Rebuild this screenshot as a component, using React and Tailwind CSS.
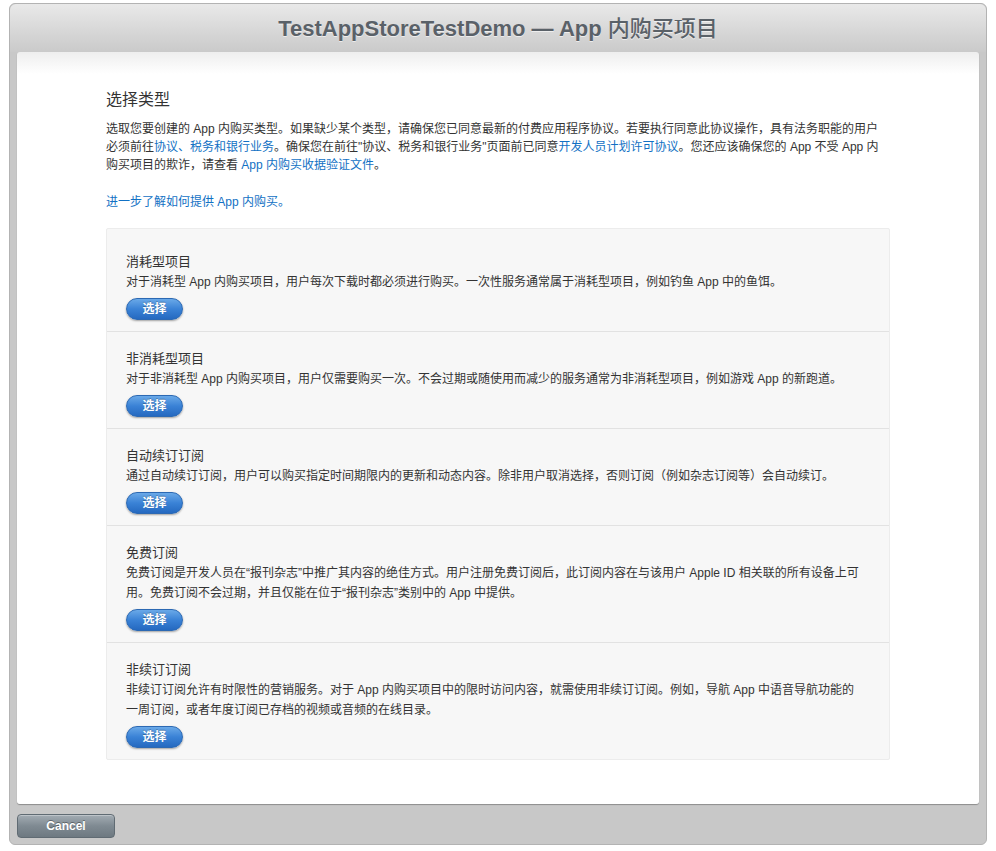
import React from "react";

const font = { fontFamily: '"Liberation Sans", "Noto Sans CJK SC", sans-serif' };

const sections = [
  {
    title: "消耗型项目",
    desc: ["对于消耗型 App 内购买项目，用户每次下载时都必须进行购买。一次性服务通常属于消耗型项目，例如钓鱼 App 中的鱼饵。"],
  },
  {
    title: "非消耗型项目",
    desc: ["对于非消耗型 App 内购买项目，用户仅需要购买一次。不会过期或随使用而减少的服务通常为非消耗型项目，例如游戏 App 的新跑道。"],
  },
  {
    title: "自动续订订阅",
    desc: ["通过自动续订订阅，用户可以购买指定时间期限内的更新和动态内容。除非用户取消选择，否则订阅（例如杂志订阅等）会自动续订。"],
  },
  {
    title: "免费订阅",
    desc: [
      "免费订阅是开发人员在“报刊杂志”中推广其内容的绝佳方式。用户注册免费订阅后，此订阅内容在与该用户 Apple ID 相关联的所有设备上可",
      "用。免费订阅不会过期，并且仅能在位于“报刊杂志”类别中的 App 中提供。",
    ],
  },
  {
    title: "非续订订阅",
    desc: [
      "非续订订阅允许有时限性的营销服务。对于 App 内购买项目中的限时访问内容，就需使用非续订订阅。例如，导航 App 中语音导航功能的",
      "一周订阅，或者年度订阅已存档的视频或音频的在线目录。",
    ],
  },
];

function SelectButton() {
  return (
    <button className="mt-[6px] h-[22px] w-[57px] rounded-full border border-[#2c69b3] bg-[linear-gradient(to_bottom,#6aa9e8,#3a82d6_50%,#2569c0)] text-[12px] font-bold leading-[20px] text-white shadow-[0_1px_2px_rgba(0,0,0,0.35)] [text-shadow:0_-1px_0_rgba(0,0,0,0.25)]">
      选择
    </button>
  );
}

export default function App() {
  return (
    <div style={font} className="h-[851px] w-[996px] bg-white px-[9px] pt-[3px]">
      <div className="flex h-[842px] flex-col rounded-[6px] border border-[#b3b3b3] bg-[#c8c8c8]">
        <div className="flex h-[48px] items-center justify-center rounded-t-[6px] bg-[linear-gradient(to_bottom,#e9e9e9,#d6d6d6_60%,#cacaca)]">
          <h1 className="text-[22px] font-bold text-[#5a6168] [text-shadow:0_1px_0_rgba(255,255,255,0.6)]">
            TestAppStoreTestDemo — App <span className="font-medium">内购买项目</span>
          </h1>
        </div>
        <div className="mx-[7px] h-[752px] rounded-[3px] bg-[linear-gradient(to_bottom,#eeeeee_0px,#ffffff_22px)] px-[89px] pt-[36px] shadow-[0_1px_1px_rgba(0,0,0,0.3)]">
          <h2 className="text-[16px] leading-[24px] text-[#333]">选择类型</h2>
          <p className="mt-[8px] text-[12px] leading-[18px] text-[#333]">
            选取您要创建的 App 内购买类型。如果缺少某个类型，请确保您已同意最新的付费应用程序协议。若要执行同意此协议操作，具有法务职能的用户必须前往
            <span className="text-[#1271c4]">协议、税务和银行业务</span>
            。确保您在前往"协议、税务和银行业务"页面前已同意
            <span className="text-[#1271c4]">开发人员计划许可协议</span>
            。您还应该确保您的 App 不受 App 内购买项目的欺诈，请查看 <span className="text-[#1271c4]">App 内购买收据验证文件</span>。
          </p>
          <p className="mt-[19px] text-[12px] leading-[18px] text-[#1271c4]">进一步了解如何提供 App 内购买。</p>
          <div className="mt-[17px] rounded-[2px] border border-[#ececec] bg-[#f7f7f7] pt-[6px]">
            {sections.map((s, i) => (
              <div
                key={s.title}
                className={
                  i < sections.length - 1
                    ? "border-b border-[#e2e2e2] px-[19px] pb-[11px] pt-[17px]"
                    : "px-[19px] pb-[11px] pt-[17px]"
                }
              >
                <div className="text-[13px] leading-[20px] text-[#333]">{s.title}</div>
                {s.desc.map((d) => (
                  <div key={d} className="text-[12px] leading-[20px] whitespace-nowrap text-[#333]">
                    {d}
                  </div>
                ))}
                <SelectButton />
              </div>
            ))}
          </div>
        </div>
        <div className="flex px-[7px] pt-[10px]">
          <button className="h-[24px] w-[98px] rounded-[4px] border border-[#606b73] bg-[linear-gradient(to_bottom,#a3acb3,#7f8a92_50%,#6e7981)] text-[12px] font-bold text-white [text-shadow:0_-1px_0_rgba(0,0,0,0.35)] shadow-[inset_0_1px_0_rgba(255,255,255,0.3)]">
            Cancel
          </button>
        </div>
      </div>
    </div>
  );
}
